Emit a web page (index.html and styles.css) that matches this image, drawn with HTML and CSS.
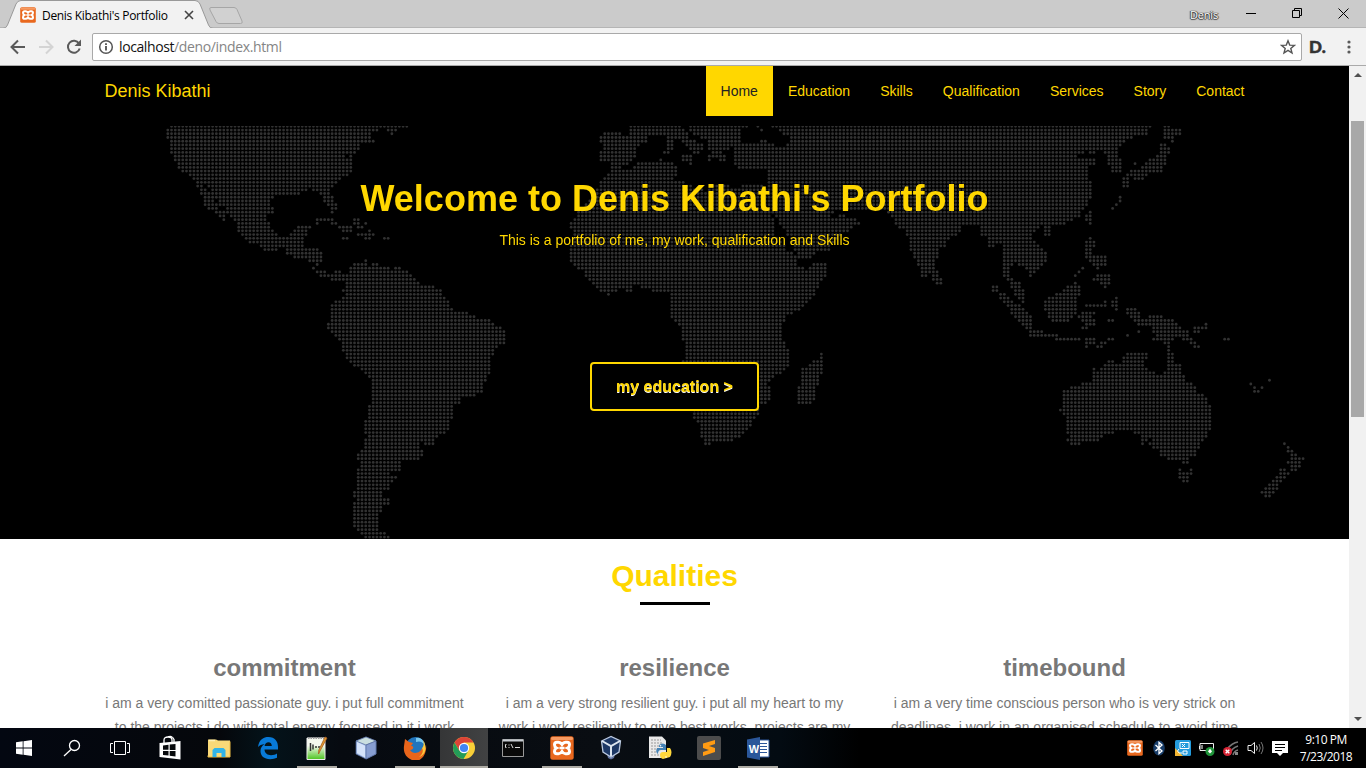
FILE: index.html
```html
<!DOCTYPE html>
<html lang="en">
<head>
<meta charset="utf-8">
<title>Denis Kibathi's Portfolio</title>
<link rel="stylesheet" href="styles.css">
</head>
<body>
<svg width="0" height="0" class="defs">
  <symbol id="xampp" viewBox="0 0 24 24"><rect x=".3" y=".3" width="23.4" height="23.4" rx="2.500" fill="#e9681e"/><rect x="1" y="1" width="22" height="3" rx="1.500" fill="#f69a62"/><path d="M7 6.200h1.500Q10.500 6.200 12 8.500 13.500 6.200 15.500 6.200H17q2.500 0 2.500 2.500 0 2.300-2 3.300 2 1 2 3.300 0 2.500-2.500 2.500h-1.500Q13.500 17.800 12 15.500 10.500 17.800 8.500 17.800H7q-2.500 0-2.500-2.500 0-2.300 2-3.300-2-1-2-3.300 0-2.500 2.500-2.500z" fill="none" stroke="#fff" stroke-width="3"/><path d="M9.500 12h5" stroke="#fff" stroke-width="2.500"/></symbol>
</svg>
<div class="screen">
  <header class="titlebar">
    <svg class="tabs" width="260" height="28" viewBox="0 0 260 28"><path d="M0 28.500H3Q6 28.500 7.500 25L16 4Q17.500 .5 21 .5H195Q198.500 .5 200 4L208.500 25Q210 28.500 213 28.500" fill="#f2f2f2" stroke="#999"/><path d="M211 7.500H234Q236 7.500 237 9.500L242 21Q243 23.500 240.500 23.500H219Q217 23.500 216 21.500L210 10Q209 7.500 211 7.500Z" fill="#d1d1d1" stroke="#a6a6a6"/><path d="M185 11l8 8m0-8l-8 8" stroke="#444" stroke-width="1.600"/></svg>
    <div class="tab"><svg width="16" height="16"><use href="#xampp"/></svg><span>Denis Kibathi's Portfolio</span></div>
    <span class="user">Denis</span>
    <svg class="winbtns" width="110" height="28" viewBox="0 0 110 28" fill="none" stroke="#000"><path d="M0 13.500h10M46.500 10.500h7v7h-7zM48.500 10V8.500h7v7H54M92.500 8.500l10 10m0-10l-10 10"/></svg>
  </header>
  <div class="toolbar">
    <svg class="navbtns" width="82" height="36" viewBox="0 0 82 36" fill="none" stroke-width="2"><path d="M25 18H12m6-6.500L11.500 18l6.500 6.500" stroke="#5a5a5a"/><path d="M39 18h13m-6-6.500l6.500 6.500-6.500 6.500" stroke="#d4d4d4"/><path d="M79 14.500a6 6 0 1 0 .7 5" stroke="#5a5a5a"/><path d="M81 10.500v6.500h-6.500z" fill="#5a5a5a"/></svg>
    <div class="address">
      <svg width="16" height="16" viewBox="0 0 16 16"><circle cx="8" cy="8" r="6.300" fill="none" stroke="#555" stroke-width="1.500"/><path d="M8 7v4.500M8 4.200v1.700" stroke="#444" stroke-width="1.700"/></svg>
      <span class="host">localhost</span><span class="path">/deno/index.html</span>
      <svg class="star" width="16" height="16" viewBox="0 0 16 16"><path d="M8 1.800l1.700 4.300 4.700.3-3.600 3 1.200 4.600L8 11.400 4 14l1.200-4.600-3.600-3 4.700-.3z" fill="none" stroke="#555" stroke-width="1.400"/></svg>
    </div>
    <span class="ext">D.</span>
    <svg class="dots" width="6" height="16" viewBox="0 0 6 16" fill="#5a5a5a"><circle cx="3" cy="3" r="1.600"/><circle cx="3" cy="8" r="1.600"/><circle cx="3" cy="13" r="1.600"/></svg>
  </div>
  <div class="viewport">
    <main class="page">
      <nav class="nav">
        <span class="brand">Denis Kibathi</span>
        <div class="links"><a class="active">Home</a><a>Education</a><a>Skills</a><a>Qualification</a><a>Services</a><a>Story</a><a>Contact</a></div>
      </nav>
      <section class="hero">
        <canvas id="map" class="map" width="1349" height="413"></canvas>
        <div class="hero-text">
          <h1>Welcome to Denis Kibathi's Portfolio</h1>
          <p>This is a portfolio of me, my work, qualification and Skills</p>
          <a class="button">my education &gt;</a>
        </div>
      </section>
      <section class="qualities">
        <h2>Qualities</h2>
        <div class="rule"></div>
        <div class="columns">
          <div><h3>commitment</h3><p>i am a very comitted passionate guy. i put full commitment<br>to the projects i do with total energy focused in it i work</p></div>
          <div><h3>resilience</h3><p>i am a very strong resilient guy. i put all my heart to my<br>work i work resiliently to give best works. projects are my</p></div>
          <div><h3>timebound</h3><p>i am a very time conscious person who is very strick on<br>deadlines. i work in an organised schedule to avoid time</p></div>
        </div>
      </section>
    </main>
    <div class="scrollbar">
      <svg width="17" height="17" viewBox="0 0 17 17"><path d="M5 11l4-4 4 4z" fill="#505050"/></svg>
      <div class="thumb"></div>
      <svg class="down" width="17" height="17" viewBox="0 0 17 17"><path d="M5 6l4 4 4-4z" fill="#505050"/></svg>
    </div>
  </div>
  <footer class="taskbar">
    <div class="apps">
      <div class="sys"><svg width="16" height="16" viewBox="0 0 16 16" fill="#fff"><path d="M0 2.200l6.700-.9v6.200H0zM7.500 1.200L16 0v7.500H7.500zM0 8.400h6.700v6.300L0 13.800zM7.500 8.400H16V16l-8.500-1.200z"/></svg></div>
      <div class="sys"><svg width="18" height="18" viewBox="0 0 18 18" fill="none" stroke="#fff" stroke-width="1.300"><circle cx="11.500" cy="6.500" r="5"/><path d="M8 10.500L1 17"/></svg></div>
      <div class="sys"><svg width="20" height="16" viewBox="0 0 20 16" fill="none" stroke="#fff"><path d="M4.500 1.500h11v13h-11zM3 3.500H.5v9H3M17 3.500h2.500v9H17"/></svg></div>
      <div><svg width="24" height="26" viewBox="0 0 24 26"><path d="M6 9V5q0-3 4-3t4 3v4M9 2.500q5-3 7 2v4" fill="none" stroke="#fff" stroke-width="1.300"/><path d="M1.500 8L22.500 6v18.500L1.500 22z" fill="#fff"/><path d="M5 10.500l5.500-.7v5H5zM11.700 9.600l5.800-.7v6h-5.800zM5 16h5.500v4.600L5 20zM11.700 16h5.800v5.500l-5.800-.8z" fill="#080a0d"/></svg></div>
      <div><svg width="24" height="22" viewBox="0 0 24 22"><path d="M1 2.500h8l2 1h12V20H1z" fill="#f9d978"/><path d="M2 3.500h6" stroke="#fdf0b5" stroke-width="1.500"/><path d="M1 18.500V20h22V4.500" fill="none" stroke="#eebd45"/><path d="M5.500 20v-7l2-2h9l2 2v7h-4v-4H9.500v4z" fill="#31b4e8"/></svg></div>
      <div><svg width="22" height="24" viewBox="0 0 22 24"><path d="M1 11C2 3.500 6.500 1 11.500 1 18 1 21 5.500 21 11v2.500H7.500c.2 4 3.200 5.700 6.500 5.700 2.500 0 4.500-.7 6-1.700v4.300C18 22.700 16 23.200 13.200 23.200 7 23.200 3.500 19.800 3.500 15c0-3 1.500-5.600 4.300-7C4.500 8.500 2.300 9.300 1 11zM7.600 10h7.200c0-2.500-1.300-3.800-3.300-3.800C9.400 6.200 8 7.700 7.600 10z" fill="#087ad8"/></svg></div>
      <div class="run"><svg width="24" height="26" viewBox="0 0 24 26"><defs><linearGradient id="g" x2="0" y2="1"><stop offset=".35" stop-color="#f4f8ee"/><stop offset="1" stop-color="#4cc51f"/></linearGradient></defs><path d="M2 3h18v21.500H2z" fill="url(#g)" stroke="#eee"/><path d="M3 3h17" stroke="#999" stroke-width="2" stroke-dasharray="1.500 1"/><path d="M5.500 8v8M8 9.500v5M10 12h2m1 0h2" stroke="#333" stroke-width="1.500"/><path d="M22 3l-7 13-1.500 3 .3-4L20 2z" fill="#df9a2f" stroke="#a75d22" stroke-width=".8"/></svg></div>
      <div><svg width="24" height="24" viewBox="0 0 24 24" stroke="#556a9c" stroke-width=".7"><path d="M2 5l10-4 10 4v13l-10 5L2 18z" fill="#a4bce6"/><path d="M2 5l10 4 10-4-10-4z" fill="#cadfe0"/><path d="M12 9v14l10-5V5z" fill="#879ed1"/><path d="M3 6v11l8 4.500V9.700z" fill="#d5e3fa" stroke="none"/></svg></div>
      <div class="run"><svg width="24" height="24" viewBox="0 0 24 24"><circle cx="12.500" cy="11" r="10" fill="#2175bd"/><path d="M13 2c4-1 8 2 8 6-3-3-5-3-8-2z" fill="#75c6ef"/><path d="M2 3l4 3 4 1-2 3c4 0 2 4-1 4 3 5 11 3 12-2 1 2 4 1 4-3 1 7-3 16-11 16C4 23 0 18 1 10z" fill="#e8651b"/><path d="M20 4c5 8 2 15-4 17 3-2 5-6 3-9 2-2 2-5 1-8z" fill="#fcc93a"/></svg></div>
      <div class="run active"><svg width="24" height="24" viewBox="0 0 24 24"><circle cx="12" cy="12" r="11" fill="#f9cf38"/><path d="M12 1a11 11 0 0 1 9.500 5.500H12L7.500 15 2.500 6.500A11 11 0 0 1 12 1" fill="#dc4437"/><path d="M2.500 6.500A11 11 0 0 0 11.500 23l5-8.500L12 17l-4.800-2.500z" fill="#239c58"/><circle cx="12" cy="12" r="5.200" fill="#fff"/><circle cx="12" cy="12" r="4.100" fill="#4285f4"/></svg></div>
      <div><svg width="24" height="20" viewBox="0 0 24 20"><path d="M1.500 1.500h21v17h-21z" fill="#090909" stroke="#999"/><path d="M2 2.500h20" stroke="#c7ccd2" stroke-width="2"/><path d="M5.500 6.500H4.500v3h1M8 6.500v1m0 1.500v1M10 6l2 4M14 9.500h5" fill="none" stroke="#ddd"/></svg></div>
      <div class="run"><svg width="24" height="24"><use href="#xampp"/></svg></div>
      <div><svg width="22" height="26" viewBox="0 0 22 26"><path d="M7 19l1 4 3 1.500L14 23l1-4z" fill="#6274a2"/><path d="M1.500 6L11 1.500 20.500 6 19 17l-8 5-8-5z" fill="#1c3764" stroke="#bac8df" stroke-width="1.300"/><path d="M2 6l9 5 9-5M11 11v10" fill="none" stroke="#dce5ef" stroke-width="2"/></svg></div>
      <div><svg width="24" height="26" viewBox="0 0 24 26"><path d="M1 1.500h13l4 4V23H1z" fill="#e9e9e9"/><path d="M3 5h10M3 8h12M3 11h11M3 14h8M3 17h7M3 20h8" stroke="#999" stroke-dasharray="2 1"/><path d="M11 10q4-3 7 0v5h-5q-3 0-3 4-3-2-1-6h6v-1h-4z" fill="#4482b5"/><path d="M19 13h3q3 4 0 9l-7 2q-3-1-3-4 0-3 3-3h4z" fill="#ffd83d"/><circle cx="12.500" cy="10.800" r=".8" fill="#fff"/><circle cx="18" cy="22" r=".8" fill="#fff"/></svg></div>
      <div><svg width="24" height="24" viewBox="0 0 24 24"><rect width="24" height="24" rx="2" fill="#4c4c4c"/><path d="M6 7.500L18 4v4l-6 2 6 2v4L6 20v-4l6-2-6-2z" fill="#ff9b13"/></svg></div>
      <div class="run"><svg width="24" height="24" viewBox="0 0 24 24"><path d="M12 4h11v17H12z" fill="#fff" stroke="#2c579a"/><path d="M14 7.500h7M14 10.500h7M14 13.500h7M14 16.500h7" stroke="#2c579a" stroke-width="1.200"/><path d="M1 3.500L14 1v23L1 21.500z" fill="#2b579a"/><text x="2.700" y="16.500" class="word">W</text></svg></div>
    </div>
    <div class="tray">
      <svg width="16" height="16"><use href="#xampp"/></svg>
      <svg width="16" height="16" viewBox="0 0 16 16"><ellipse cx="8" cy="8" rx="5.800" ry="7.500" fill="#173c68"/><path d="M4.500 5l6.500 6-3 2.500V2.500L11 5l-6.500 6" fill="none" stroke="#fff" stroke-width="1.300"/></svg>
      <svg width="16" height="16" viewBox="0 0 16 16"><rect width="16" height="16" rx="1.500" fill="#249bdc"/><path d="M0 8l8 8H0z" fill="#f2b633"/><path d="M5 2.500h9v6H5zM7 4l3 3m0-3L7 7M4 9q-3 2 0 4h3m1-2h4v3H8z" fill="none" stroke="#fff"/></svg>
      <svg width="16" height="16" viewBox="0 0 16 16"><path d="M1 3.500h13.500v7H1zM.5 6v3" fill="none" stroke="#eee"/><path d="M3 5v4" stroke="#fff"/><circle cx="11" cy="11.500" r="4.500" fill="#20943a"/><path d="M11 8.500l2 3-2 2-2-2z" fill="#fff"/></svg>
      <svg width="16" height="16" viewBox="0 0 16 16"><path d="M4 15V9Q9 3 15 2M7 15Q8 8 15 6M10 15q1-4 5-5" fill="none" stroke="#777" stroke-width="1.500"/><path d="M12 12h3v3h-3z" fill="#888"/><circle cx="4.500" cy="11.500" r="4.500" fill="#d62334"/><path d="M2.700 9.700l3.600 3.600m0-3.600l-3.600 3.600" stroke="#fff" stroke-width="1.400"/></svg>
      <svg width="17" height="16" viewBox="0 0 17 16" fill="none"><path d="M1 5.500h3l3.500-3v11l-3.500-3H1zM9.500 5.500q1.500 2.500 0 5" stroke="#eee"/><path d="M12 4q2.500 4 0 8M14 2q4 6 0 12" stroke="#777"/></svg>
      <svg width="16" height="17" viewBox="0 0 16 17"><path d="M0 1h16v12h-5l-3 3-3-3H0z" fill="#fff"/><path d="M3 4.500h10M3 7.500h10M3 10.500h7" stroke="#000"/></svg>
      <div class="clock"><span>9:10 PM</span><span>7/23/2018</span></div>
    </div>
  </footer>
</div>
<script src="map.js"></script>
</body>
</html>
```

FILE: styles.css
```css
* { box-sizing: border-box; }
body { margin: 0; overflow: hidden; font-family: "Liberation Sans", Arial, sans-serif; }
.defs { position: absolute; }
.screen { width: 1366px; height: 768px; display: flex; flex-direction: column; }
.titlebar, .toolbar, .taskbar { font-family: "Open Sans", sans-serif; flex: none; }
.titlebar { height: 28px; background: #cbcbcb; position: relative; display: flex; align-items: center; box-shadow: inset 0 -1px #b5b5b5; }
.tabs { position: absolute; left: 0; top: 0; }
.tab { position: relative; display: flex; align-items: center; gap: 6px; margin-left: 20px; padding-top: 2px; height: 28px; font-size: 12px; letter-spacing: -0.31px; white-space: nowrap; }
.user { margin-left: auto; font-size: 11px; letter-spacing: -0.2px; color: #fff; text-shadow: 0 0 1px #222, 1px 0 1px #444, -1px 0 1px #444, 0 1px 1px #444; margin-right: 28px; }
.winbtns { margin-right: 10px; flex: none; }
.toolbar { height: 38px; background: #f2f2f2; border-bottom: 1px solid #aaa; display: flex; align-items: center; }
.navbtns { flex: none; margin-right: 10px; }
.address { width: 1210px; height: 28px; background: #fff; border: 1px solid #a9a9a9; border-radius: 2px; display: flex; align-items: center; padding: 0 5px; font-size: 14px; letter-spacing: -0.4px; }
.host { margin-left: 5px; color: #111; }
.path { color: #858585; letter-spacing: -0.36px; }
.star { margin-left: auto; }
.ext { font: 900 17px "Lato", sans-serif; width: 25px; margin-left: 7px; color: #333; -webkit-text-stroke: .5px #333; }
.dots { margin-left: 12px; }
.viewport { height: 662px; display: flex; overflow: hidden; }
.page { width: 1349px; background: #fff; overflow: hidden; }
.nav { height: 60px; padding: 0 89.5px 0 104.5px; background: #000; display: flex; justify-content: space-between; align-items: flex-start; color: #ffd700; }
.brand { font-size: 18px; line-height: 50px; }
.links { display: flex; }
.links a { padding: 0 15px; line-height: 50px; font-size: 14px; }
.links .active { background: #ffd700; color: #222; }
.hero { height: 413px; background: #000; position: relative; }
.map { position: absolute; left: 0; top: 0; }
.hero-text { position: relative; display: flex; flex-direction: column; align-items: center; color: #ffd700; padding-top: 53px; }
h1 { margin: 0; font-size: 36px; line-height: 40px; }
.hero-text p { margin: 11px 0 0; font-size: 14px; line-height: 20px; }
.button { margin-top: 112px; width: 169px; height: 49px; border: 2px solid #ffd700; border-radius: 4px; background: #000; font-size: 16px; font-weight: bold; line-height: 45px; text-align: center; text-shadow: 0 1px #fff; }
.qualities { color: #777; text-align: center; padding-top: 20px; }
h2 { margin: 0; color: #ffd700; font-size: 30px; line-height: 33px; }
.rule { width: 70px; height: 3px; background: #000; margin: 10px auto 50px; }
.columns { display: grid; grid-template-columns: repeat(3, 390px); margin-left: 89.5px; }
h3 { margin: 0; font-size: 24px; line-height: 26px; }
.columns p { margin: 10px 0 0; font-size: 14px; line-height: 24px; white-space: nowrap; }
.scrollbar { width: 17px; background: #f1f1f1; display: flex; flex-direction: column; }
.thumb { width: 13px; height: 296px; margin: 38px 2px 0; background: #a8a8a8; }
.down { margin-top: auto; }
.taskbar { height: 40px; background: linear-gradient(90deg, #030711, #05070b 220px, #04131a 268px, #060a10 340px, #090d12 600px, #030b12 780px, #000 860px); display: flex; justify-content: space-between; }
.apps { display: flex; }
.apps > div { width: 49px; height: 40px; display: flex; align-items: center; justify-content: center; position: relative; flex: none; }
.apps > .sys { width: 48px; }
.apps > .sys + div:not(.sys) { margin-left: 1px; }
.apps > .run::after { content: ""; position: absolute; bottom: 0; left: 5px; width: 40px; height: 2px; background: #adaba4; }
.apps > .active { background: linear-gradient(90deg, #353637, #414243) no-repeat 1px 0 / 48px 40px; }
.apps > .active::after { left: 1px; width: 48px; }
.word { font: bold 11px "Liberation Sans", sans-serif; fill: #fff; }
.tray { display: flex; align-items: center; gap: 8px; padding-right: 13px; color: #fff; }
.tray svg { flex: none; }
.clock { width: 54px; margin-left: 3px; display: flex; flex-direction: column; align-items: center; font-size: 12px; line-height: 17px; letter-spacing: -0.5px; padding-bottom: 1px; }
```

FILE: map.js
```js
// Dotted world map: outlines are in thirds of a pixel, relative to each sheet's origin.
const sheets = [
  { at: [450, 360], land: [
    "47,25 60,25 60,12 778,12 778,25 742,25 742,36 730,46 722,46 720,36 708,25 690,25 690,36 668,36 668,57 678,57 678,69 634,69 634,86 618,103 603,114 596,103 590,108 608,125 608,148 590,168 560,181 556,200 545,208 545,226 551,240 562,255 562,270 551,281 541,281 541,260 518,248 515,226 506,215 480,208 455,214 450,226 375,226 375,238 360,245 360,260 375,264 375,281 353,284 353,300 365,315 365,325 386,348 418,348 418,340 430,328 440,318 486,318 474,328 474,348 463,350 463,368 456,382 508,382 508,392 520,395 520,426 512,428 508,440 498,446 520,452 535,465 550,463 553,450 575,450 575,462 595,462 595,445 605,438 605,428 640,428 640,416 652,416 652,430 658,445 665,430 688,430 688,440 718,437 718,450 733,450 733,437 756,437 756,450 778,450 778,462 800,475 800,483 811,494 858,494 858,505 880,505 880,530 897,545 897,562 910,562 910,573 958,573 958,585 980,587 980,597 1025,597 1025,610 1040,618 1058,620 1058,630 1070,630 1070,664 1058,672 1045,684 1035,690 1035,710 1025,715 1025,765 1012,770 1012,785 1000,790 1000,820 980,820 980,832 935,832 933,845 920,852 912,860 912,898 900,900 900,922 880,940 855,965 843,978 820,978 815,965 803,968 812,983 820,990 820,1000 800,1022 756,1022 756,1055 722,1055 722,1065 742,1065 742,1078 722,1092 722,1112 698,1112 698,1135 722,1133 722,1157 698,1157 698,1178 680,1190 688,1200 688,1232 698,1236 720,1245 720,1260 640,1260 640,1245 618,1232 607,1212 607,1145 620,1135 607,1135 607,1113 618,1110 618,1098 628,1090 618,1085 618,1045 628,1040 628,1023 618,1020 618,1000 640,985 640,955 652,950 640,930 640,898 652,895 652,853 664,850 664,775 650,770 630,748 605,738 595,720 580,695 575,665 562,660 540,637 530,625 530,605 550,600 541,580 541,562 552,550 585,520 575,515 575,507 588,505 586,484 545,482 540,472 510,470 497,458 485,445 497,438 495,428 475,425 470,415 440,413 408,402 408,390 395,382 380,393 352,393 330,380 305,370 285,358 262,335 262,305 250,300 240,290 228,285 228,262 210,255 198,240 183,232 180,215 172,200 155,190 130,180 117,168 95,157 83,145 72,122 60,100 60,58 47,55",
    "137,183 155,183 170,205 183,228 205,262 232,282 226,302 216,302 205,292 183,270 160,255 160,230 148,215 137,200",
    "497,293 552,293 562,313 541,313 535,303 515,305 510,313 497,313", "565,316 610,316 600,338 575,338 565,326",
    "610,294 630,294 630,313 610,313", "642,304 653,304 653,316 642,316", "620,316 642,316 642,327 620,327",
    "620,338 655,338 655,327 663,327 678,340 672,349 620,349", "575,350 597,350 597,361 575,361", "642,350 663,350 663,361 642,361", "698,350 720,350 720,361 698,361"
  ], dots: [] },
  { at: [1620, 360], land: [
    "268,12 425,12 425,25 436,37 447,37 447,60 470,60 470,70 492,70 492,92 480,92 480,103 458,103 458,92 436,81 425,70 425,57 392,57 400,70 400,90 390,103 370,103 370,92 380,85 378,50 325,50 325,65 295,75 290,85 290,108 268,125 178,125 178,92 190,88 190,70 178,70 178,47 190,36 245,36 245,47 268,40",
    "425,103 458,103 458,135 447,135 447,125 425,125",
    "447,12 628,12 628,25 605,30 605,68 660,68 660,57 682,57 682,70 705,70 705,82 740,82 740,70 750,68 750,50 728,45 728,36 715,28 695,20 695,12 1835,12 1835,25 1825,25 1825,48 1790,48 1767,58 1745,68 1735,92 1735,103 1745,115 1747,150 1735,157 1715,157 1713,140 1703,135 1700,110 1690,100 1690,92 1665,92 1665,103 1648,103 1646,92 1635,100 1615,103 1615,120 1635,115 1668,115 1668,137 1645,137 1645,180 1657,185 1657,235 1645,240 1645,245 1630,270 1615,292 1600,303 1565,315 1545,315 1500,322 1492,335 1478,345 1478,360 1495,370 1510,385 1522,395 1522,430 1505,440 1487,462 1475,473 1467,470 1467,460 1455,448 1435,432 1420,428 1410,440 1410,475 1420,478 1445,490 1445,505 1456,520 1456,550 1445,550 1435,540 1420,520 1412,495 1400,480 1388,470 1388,378 1370,370 1365,382 1343,382 1343,350 1325,345 1320,318 1310,305 1300,318 1265,318 1262,335 1250,348 1230,358 1215,378 1195,385 1197,415 1187,420 1187,450 1175,460 1160,473 1142,473 1140,440 1130,430 1118,410 1110,380 1108,350 1097,345 1097,320 1075,325 1063,310 1050,285 1035,272 960,272 905,268 890,275 875,285 880,297 900,285 940,290 960,310 940,325 900,350 880,372 865,393 835,397 815,415 775,415 765,390 750,370 735,335 720,310 705,290 690,270 680,230 680,150 655,155 650,148 635,145 595,145 583,135 583,95 575,80 560,90 550,100 560,120 550,125 530,115 505,125 505,110 515,95 505,85 503,62 480,55 458,45 450,30",
    "210,125 270,125 262,137 235,148 280,148 280,137 300,125 400,125 412,140 412,160 400,180 430,182 460,197 500,215 510,200 540,190 575,200 600,200 625,190 650,195 680,200 690,235 690,275 705,310 708,350 730,365 740,390 770,410 772,440 800,445 825,430 862,430 862,460 840,485 825,520 795,550 770,575 740,587 735,605 725,620 725,660 738,670 748,700 748,740 730,755 700,775 685,785 690,810 690,840 680,853 660,853 660,880 645,895 635,915 605,945 580,965 515,965 512,977 493,977 493,960 482,950 482,910 460,895 455,870 437,850 430,800 425,720 437,705 437,665 425,660 425,620 390,590 390,517 335,515 335,505 310,508 295,493 280,495 280,515 258,515 250,505 230,517 212,517 210,527 200,527 200,517 178,515 160,490 135,470 133,455 100,437 88,425 88,385 95,370 100,335 88,325 88,305 100,303 110,280 130,255 160,225 178,195 178,183 200,170 212,155 212,137",
    "840,698 850,698 850,762 838,768 838,795 827,810 827,840 818,853 773,853 773,800 783,798 783,743 805,740 818,722 838,720"
  ], dots: [[655,20],[666,30],[362,119]] },
  { at: [2700, 360], land: [
    "97,450 117,450 117,470 128,475 128,493 108,493 97,482", "432,318 453,318 453,348 432,348", "568,272 577,272 577,313 567,313 556,303 556,285",
    "790,25 800,12 812,25 848,25 848,47 823,50 823,68 815,68 812,57 780,57 790,50",
    "780,70 800,70 812,85 812,103 800,106 800,125 790,148 780,160 745,160 742,170 720,182 700,182 690,170 688,203 668,203 668,172 680,160 690,148 720,148 735,125 768,105 780,100",
    "432,540 455,530 478,518 500,495 520,495 525,485 532,495 543,495 543,517 532,530 532,575 520,597 505,606 467,606 445,595 443,575 432,572",
    "275,495 297,495 297,517 320,520 330,540 365,553 385,573 398,590 398,630 380,630 365,618 340,595 330,580 330,570 305,545 297,520 275,517",
    "387,630 433,630 433,640 478,642 478,652 545,652 545,663 467,663 467,652 387,652", "556,551 610,551 610,540 622,540 622,551 610,562 556,562",
    "545,575 588,575 588,585 570,590 588,597 588,617 568,620 565,630 545,630 545,620 560,612 545,606 545,597 535,597 535,585 545,585",
    "567,350 577,350 577,360 588,362 588,382 577,385 577,405 610,405 622,418 622,438 600,438 598,448 588,448 588,438 577,436 556,412 556,362 567,360",
    "590,462 633,462 633,482 622,505 612,505 600,490 578,482 578,472", "645,530 656,530 656,573 645,573 645,562 634,560 634,540", "622,596 643,596 643,607 622,607",
    "556,652 588,652 588,663 565,685 556,685 556,672 545,665", "588,675 610,663 622,652 645,652 645,663 622,665 610,685 588,685",
    "680,562 712,562 712,573 722,575 722,597 745,597 745,585 790,585 790,597 823,597 830,607 848,620 848,630 868,630 868,652 880,663 900,672 902,685 880,685 870,670 850,663 835,652 825,655 823,663 812,670 802,675 790,672 790,663 757,663 757,652 770,650 757,630 745,617 715,617 700,606 690,595 690,585 680,580",
    "880,618 912,618 915,607 924,607 924,628 902,630 902,640 880,640", "970,652 992,652 992,663 970,663"
  ], dots: [[706,131],[661,232],[661,243],[650,254],[638,265],[549,445],[538,456],[526,467],[684,646],[717,635],[807,680],[807,691]] },
  { at: [2880, 960], land: [
    "622,62 632,62 632,95 643,97 643,130 665,130 665,162 677,165 677,185 700,187 710,200 710,218 725,222 742,240 755,265 755,330 740,345 733,365 720,370 722,385 710,390 710,410 688,412 688,433 668,433 668,420 622,420 620,410 600,410 600,390 588,388 565,375 575,365 565,355 553,375 543,375 543,345 520,342 520,332 465,332 465,342 430,343 430,352 418,365 362,365 362,375 330,375 318,363 330,355 320,330 320,285 307,285 297,270 307,262 307,210 330,210 330,198 365,198 365,187 398,187 398,142 408,142 410,152 420,142 432,132 443,120 463,120 463,130 487,130 487,108 498,97 565,97 565,118 553,122 553,140 565,145 565,153 588,153 588,163 610,163 610,153 622,153",
    "655,445 665,445 665,455 690,455 690,445 700,445 700,466 688,470 688,488 668,488 655,477",
    "980,378 990,378 990,388 1000,390 1002,400 1013,402 1013,410 1035,410 1035,422 1024,422 1024,443 1013,443 1013,455 992,455 992,433 980,433 980,422 992,420 992,400 980,397",
    "958,443 980,443 980,455 990,455 990,466 980,467 980,477 968,478 968,488 957,490 957,510 945,512 945,522 935,533 913,533 913,522 902,522 902,512 913,500 925,490 935,478 946,467 958,460"
  ], dots: [[974,371],[929,181],[873,192],[907,203],[885,203],[885,214],[896,214]] }
];

const ctx = document.getElementById("map").getContext("2d");
const pitch = 3.7345, startX = 167.8, startY = 126.3, top0 = 126;
const cells = new Set();
for (const sheet of sheets) {
  const [ox, oy] = sheet.at;
  for (const outline of sheet.land) {
    const path = new Path2D("M" + outline.split(" ").join("L") + "Z");
    for (let r = 0; r < 111; r++)
      for (let c = 0; c < 306; c++)
        if (ctx.isPointInPath(path, (startX + c * pitch) * 3 - ox, (startY + r * pitch) * 3 - oy)) cells.add(c + "," + r);
  }
  for (const [x, y] of sheet.dots)
    cells.add(Math.round(((x + ox) / 3 - startX) / pitch) + "," + Math.round(((y + oy) / 3 - startY) / pitch));
}
ctx.fillStyle = "#323232";
for (const cell of cells) {
  const [c, r] = cell.split(",").map(Number);
  ctx.beginPath();
  ctx.arc(startX + c * pitch, startY + r * pitch - top0, 1.4, 0, 7);
  ctx.fill();
}
```
